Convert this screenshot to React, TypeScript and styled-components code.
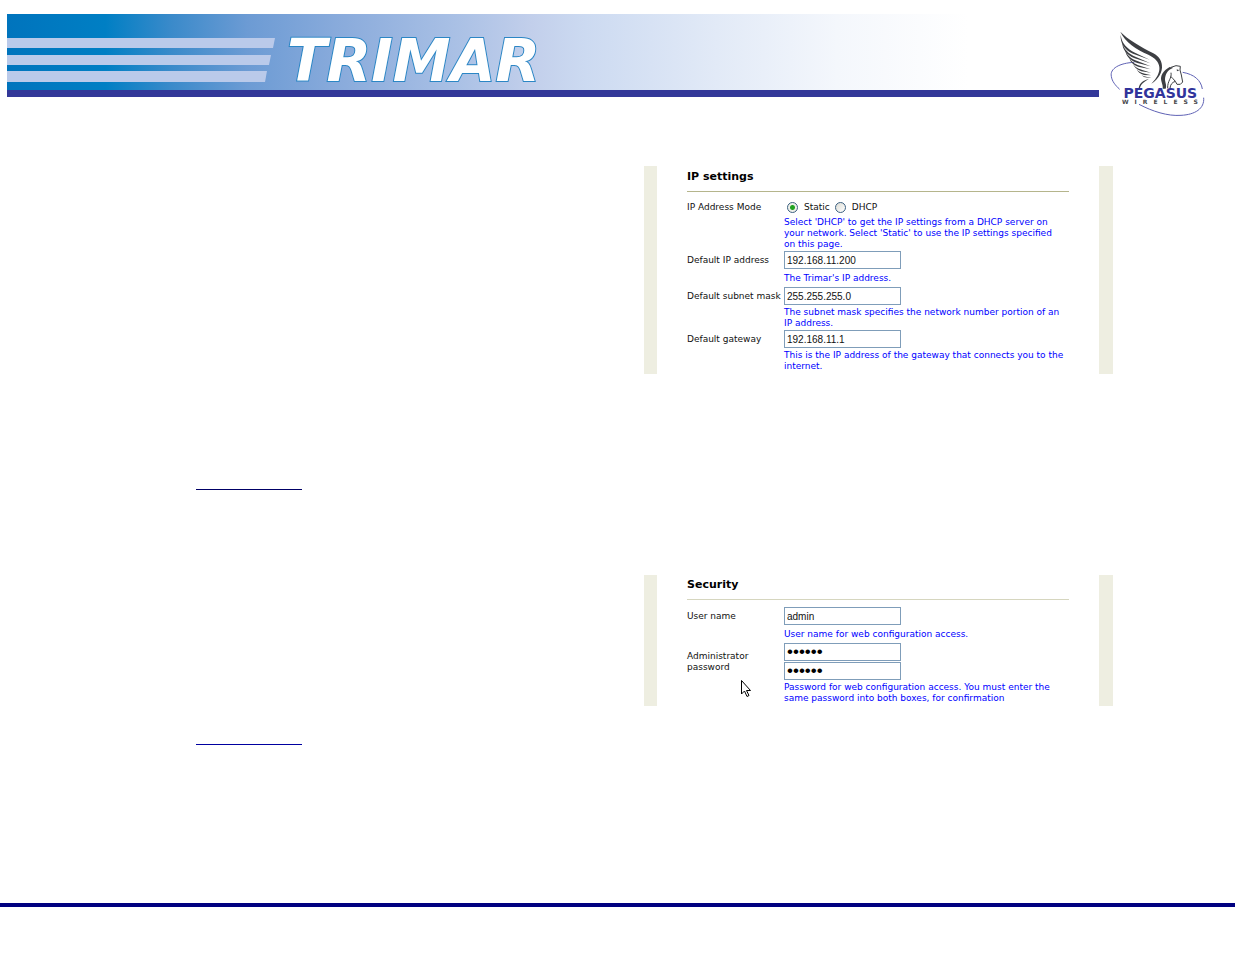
import React from "react";
import styled, { createGlobalStyle, css } from "styled-components";

const GlobalStyle = createGlobalStyle`
  *, *::before, *::after { box-sizing: border-box; }
  body {
    margin: 0;
    background: #ffffff;
    color: #111111;
    font-family: "DejaVu Sans", Verdana, sans-serif;
    font-size: 9px;
    line-height: 11px;
  }
`;

const Page = styled.div`
  display: flex;
  flex-direction: column;
`;

const Header = styled.header`
  display: flex;
  align-items: flex-start;
  gap: 10px;
  padding: 14px 28px 0 7px;
`;

const Banner = styled.div`
  flex: 1;
  height: 83px;
  border-bottom: 7px solid #333899;
  background: linear-gradient(
    90deg,
    #0074bd 0,
    #007fc4 9%,
    #3a8aca 15%,
    #6c9bd4 22%,
    #8bacdc 31%,
    #a9c0e5 41%,
    #c2cfeb 48%,
    #ccdaf1 53%,
    #e2eaf7 65%,
    #f4f7fc 76%,
    #ffffff 88%
  );
`;

const BannerArt = styled.svg`
  display: block;
  width: 600px;
  height: 76px;
  overflow: visible;
`;

const Wordmark = styled.text`
  font-family: "DejaVu Sans", Verdana, sans-serif;
  font-size: 58px;
  font-weight: 700;
  font-style: italic;
  fill: #ffffff;
  stroke: #2b86c5;
  stroke-width: 2;
  paint-order: stroke;
`;

const Logo = styled.svg`
  flex: none;
  width: 98px;
  height: 87px;
  margin-top: 16px;
`;

const Main = styled.main`
  display: flex;
  flex-direction: column;
  gap: 85px;
  padding: 49px 122px 158px 196px;
`;

const Section = styled.section`
  display: flex;
  align-items: flex-start;
  justify-content: space-between;
`;

const Aside = styled.div<{ $top: number }>`
  padding-top: ${(p) => p.$top}px;
`;

const BlankLink = styled.a<{ $color: string }>`
  display: block;
  width: 106px;
  height: 14px;
  border-bottom: 1px solid ${(p) => p.$color};
`;

const Panel = styled.form<{ $tight?: boolean }>`
  flex: none;
  width: 469px;
  padding: ${(p) => (p.$tight ? 3 : 4)}px 30px 1px;
  border: solid #eeeee1;
  border-width: 0 14px 0 13px;
`;

const Title = styled.h2<{ $rule: string }>`
  margin: 0 0 7px;
  padding-bottom: 7px;
  border-bottom: 1px solid ${(p) => p.$rule};
  color: #000000;
  font-size: 11px;
  line-height: 14px;
`;

const Row = styled.div`
  display: grid;
  grid-template-columns: 97px minmax(0, 1fr);
`;

const labelText = css`
  margin: 0;
  line-height: 11px;
  white-space: nowrap;
`;

const Label = styled.label`
  ${labelText}
  align-self: center;
`;

const GroupLabel = styled.span`
  ${labelText}
  align-self: center;
`;

const Choices = styled.div`
  display: flex;
  align-items: center;
  gap: 5px;
  height: 16px;
  padding-left: 3px;
`;

const Choice = styled.label`
  display: flex;
  align-items: center;
  gap: 6px;
`;

const Radio = styled.input`
  appearance: none;
  width: 11px;
  height: 11px;
  margin: 0;
  border: 1px solid #3c6080;
  border-radius: 50%;
  background: linear-gradient(135deg, #dcdcd4, #ffffff);

  &:checked {
    background: radial-gradient(circle, #22a322 0 2px, #eef0ea 3px);
  }
`;

const Field = styled.input`
  display: block;
  width: 117px;
  height: 18px;
  padding: 0 2px;
  border: 1px solid #7f9db9;
  background: #ffffff;
  color: #111111;
  font-family: "Liberation Sans", Arial, sans-serif;
  font-size: 10px;
  outline: 0;

  &[type="password"] {
    color: #000000;
    font-size: 17px;
  }
`;

const FieldPair = styled.div`
  display: flex;
  flex-direction: column;
  gap: 1px;
`;

const Hint = styled.p<{ $single?: boolean }>`
  grid-column: 2;
  margin: 0;
  padding: ${(p) => (p.$single ? "4px 0 3px" : "2px 0 1px")};
  color: #0000ff;
  white-space: nowrap;
`;

const Pointer = styled.svg`
  position: absolute;
  left: 54px;
  top: 29px;
  width: 10px;
  height: 18px;
`;

const PointerAnchor = styled.div`
  position: relative;
  align-self: center;
`;

const Footer = styled.footer`
  height: 51px;
  border-top: 4px solid #000080;
`;

function PegasusLogo() {
  return (
    <Logo viewBox="54 30 294 261" role="img" aria-label="Pegasus Wireless">
      <g fill="none" stroke="#5f62b5" strokeWidth="3">
        <path d="M130 127C85 129 56 146 61 169C63 184 73 196 86 208" />
        <path d="M275 157C310 163 330 181 334 207M338 233C341 266 312 284 270 286C230 289 184 274 144 253" />
      </g>
      <g fill="#3d3f43">
        <path d="M88 35C109 57 151 82 187 100C205 109 214 125 213 143C211 165 196 181 181 191C198 174 207 157 205 141C203 124 191 113 172 104C136 89 102 66 88 35Z" />
        <path d="M89 44C92 70 108 86 132 98L176 119L126 101C101 90 87 69 89 44Z" />
        <path d="M94 66C97 87 112 101 135 111L178 130L131 115C106 105 93 86 94 66Z" />
        <path d="M103 90C107 105 119 116 141 124L179 139L139 129C117 121 104 108 103 90Z" />
        <path d="M115 111C119 124 128 131 147 137L179 148L144 141C126 135 116 125 115 111Z" />
        <path d="M126 130C130 140 138 145 154 150L180 158L151 154C137 149 128 141 126 130Z" />
        <path d="M137 146C142 155 150 158 162 161L181 166L159 165C148 161 140 156 137 146Z" />
        <path d="M149 161C153 168 161 169 181 173C165 174 154 171 149 161Z" />
        <path d="M236 141C216 152 207 168 211 183C214 194 216 199 215 206L224 206C228 197 222 187 222 178C223 162 229 150 247 143Z" />
        <path d="M143 204C146 188 157 181 174 176C162 184 150 190 147 204Z" />
      </g>
      <g fill="none" stroke="#3d3f43" strokeWidth="3">
        <path d="M240 142L255 137L268 139L267 150L271 165L275 186L268 193L258 193L253 184C249 178 243 174 239 169" />
        <path d="M240 158C243 176 229 181 230 205M253 184C243 187 238 194 237 205" />
      </g>
      <path d="M257 148L265 151L258 154Z" fill="#3d3f43" />
      <text
        x="208"
        y="233"
        textAnchor="middle"
        fontFamily="DejaVu Sans, sans-serif"
        fontWeight="700"
        fontSize="42"
        fill="#31349b"
      >
        PEGASUS
      </text>
      <text
        x="93"
        y="253"
        fontFamily="DejaVu Sans, sans-serif"
        fontWeight="700"
        fontSize="18"
        letterSpacing="18"
        fill="#47484c"
      >
        WIRELESS
      </text>
    </Logo>
  );
}

export default function App() {
  return (
    <Page>
      <GlobalStyle />
      <Header>
        <Banner>
          <BannerArt viewBox="0 0 600 76" role="img" aria-label="Trimar">
            <g fill="#bacaea">
              <path d="M0 24H268L266 34H0Z" />
              <path d="M0 41H264L262 51H0Z" />
              <path d="M0 57H260L258 68H0Z" />
            </g>
            <Wordmark x="280" y="67">
              TRIMAR
            </Wordmark>
          </BannerArt>
        </Banner>
        <PegasusLogo />
      </Header>

      <Main>
        <Section>
          <Aside $top={310}>
            <BlankLink href="#ip-settings" aria-label="IP settings" $color="#000066" />
          </Aside>
          <Panel id="ip-settings">
            <Title $rule="#b5b58c">IP settings</Title>
            <Row role="radiogroup" aria-labelledby="mode-label">
              <GroupLabel id="mode-label">IP Address Mode</GroupLabel>
              <Choices>
                <Choice>
                  <Radio type="radio" name="mode" defaultChecked />
                  Static
                </Choice>
                <Choice>
                  <Radio type="radio" name="mode" />
                  DHCP
                </Choice>
              </Choices>
              <Hint>
                Select 'DHCP' to get the IP settings from a DHCP server on
                <br />
                your network. Select 'Static' to use the IP settings specified
                <br />
                on this page.
              </Hint>
            </Row>
            <Row>
              <Label htmlFor="ip">Default IP address</Label>
              <Field id="ip" defaultValue="192.168.11.200" />
              <Hint $single>The Trimar's IP address.</Hint>
            </Row>
            <Row>
              <Label htmlFor="mask">Default subnet mask</Label>
              <Field id="mask" defaultValue="255.255.255.0" />
              <Hint>
                The subnet mask specifies the network number portion of an
                <br />
                IP address.
              </Hint>
            </Row>
            <Row>
              <Label htmlFor="gateway">Default gateway</Label>
              <Field id="gateway" defaultValue="192.168.11.1" />
              <Hint>
                This is the IP address of the gateway that connects you to the
                <br />
                internet.
              </Hint>
            </Row>
          </Panel>
        </Section>

        <Section>
          <Aside $top={156}>
            <BlankLink href="#security" aria-label="Security" $color="#0000a0" />
          </Aside>
          <Panel id="security" $tight>
            <Title $rule="#d6d6bf">Security</Title>
            <Row>
              <Label htmlFor="user">User name</Label>
              <Field id="user" defaultValue="admin" autoComplete="off" />
              <Hint $single>User name for web configuration access.</Hint>
            </Row>
            <Row>
              <PointerAnchor>
                <Label htmlFor="password">
                  Administrator
                  <br />
                  password
                </Label>
                <Pointer viewBox="0 0 10 18" aria-hidden="true">
                  <path
                    d="M.5 .5V14L3.5 11L6 16.5L8 15.5L5.5 10.5H9.5Z"
                    fill="#ffffff"
                    stroke="#000000"
                  />
                </Pointer>
              </PointerAnchor>
              <FieldPair>
                <Field id="password" type="password" defaultValue="secret" autoComplete="off" />
                <Field
                  type="password"
                  defaultValue="secret"
                  autoComplete="off"
                  aria-label="Confirm administrator password"
                />
              </FieldPair>
              <Hint>
                Password for web configuration access. You must enter the
                <br />
                same password into both boxes, for confirmation
              </Hint>
            </Row>
          </Panel>
        </Section>
      </Main>
      <Footer />
    </Page>
  );
}
